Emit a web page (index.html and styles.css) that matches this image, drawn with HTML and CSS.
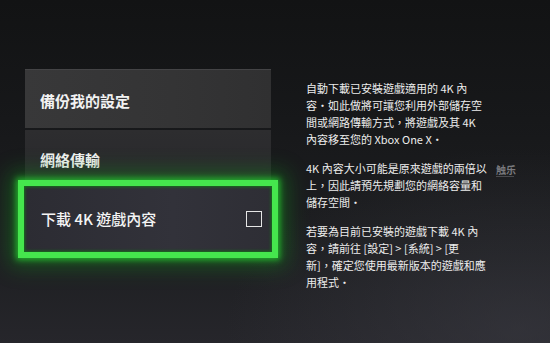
FILE: index.html
```html
<!DOCTYPE html>
<html lang="zh-Hant">
<head>
<meta charset="utf-8">
<title>Xbox 設定</title>
<link rel="stylesheet" href="styles.css">
</head>
<body>
<main class="screen">
  <section class="menu">
    <div class="item item-backup">備份我的設定</div>
    <div class="item item-net">網絡傳輸</div>
    <div class="item item-focus">
      <span class="focus-label">下載 4K 遊戲內容</span>
      <span class="check"></span>
    </div>
  </section>
  <section class="desc">
    <p>
      <span class="line">自動下載已安裝遊戲適用的 4K 內</span>
      <span class="line">容・如此做將可讓您利用外部儲存空</span>
      <span class="line">間或網路傳輸方式，將遊戲及其 4K</span>
      <span class="line">內容移至您的 Xbox One X・</span>
    </p>
    <p>
      <span class="line">4K 內容大小可能是原來遊戲的兩倍以</span>
      <span class="line">上，因此請預先規劃您的網絡容量和</span>
      <span class="line">儲存空間・</span>
    </p>
    <p>
      <span class="line">若要為目前已安裝的遊戲下載 4K 內</span>
      <span class="line">容，請前往 [設定] &gt; [系統] &gt; [更</span>
      <span class="line">新]，確定您使用最新版本的遊戲和應</span>
      <span class="line">用程式・</span>
    </p>
  </section>
  <span class="watermark">触乐<i class="wm-sub"></i></span>
</main>
</body>
</html>
```

FILE: styles.css
```css
html, body {
  margin: 0;
  padding: 0;
}

body {
  width: 550px;
  height: 343px;
  overflow: hidden;
  background: #161718;
  font-family: "Noto Sans CJK TC", "Noto Sans", sans-serif;
}

.screen {
  position: relative;
  box-sizing: border-box;
  width: 550px;
  height: 343px;
  display: flex;
  align-items: flex-start;
  padding: 69px 0 0 25px;
  background:
    radial-gradient(ellipse 420px 260px at 520px 330px, rgba(60, 60, 68, 0.55), rgba(60, 60, 68, 0) 70%),
    linear-gradient(180deg, #121314 0%, #17181a 35%, #1e1f22 75%, #26262b 100%);
}

.menu {
  width: 246px;
  display: flex;
  flex-direction: column;
}

.item {
  box-sizing: border-box;
  color: #f2f2f2;
  font-size: 15px;
  line-height: 18px;
  font-weight: 700;
  padding-left: 15px;
}

.item-backup {
  height: 59px;
  padding-top: 22px;
  background: linear-gradient(90deg, #383839 0%, #343435 60%, #303031 100%);
  border-top: 1px solid #444446;
}

.item-net {
  height: 50px;
  margin-top: 2px;
  padding-top: 21px;
  background: linear-gradient(180deg, #2d2d2f 0%, #29292c 100%);
}

.item-focus {
  position: relative;
  z-index: 1;
  height: 78px;
  margin: 0 -7px 0 -7px;
  padding: 0 10px 0 17px;
  display: flex;
  align-items: center;
  justify-content: space-between;
  border: 6px solid #45e64d;
  background: linear-gradient(90deg, #2c2c33 0%, #32323a 60%, #2e2e35 100%);
  box-shadow:
    0 0 6px 2px rgba(40, 210, 50, 0.75),
    0 0 20px 8px rgba(20, 150, 30, 0.45),
    inset 0 0 3px 1px rgba(20, 120, 25, 0.9);
  font-weight: 500;
}

.focus-label {
  font-size: 15px;
  color: #f4f4f4;
}

.check {
  width: 14px;
  height: 14px;
  border: 1.5px solid #e6e6e6;
}

.desc {
  margin: 11px 0 0 35px;
  color: #ececec;
  font-size: 11px;
  line-height: 17px;
}

.desc p {
  margin: 0 0 12px 0;
}

.line {
  display: block;
  white-space: nowrap;
}

.watermark {
  position: absolute;
  left: 496px;
  top: 164px;
  display: flex;
  flex-direction: column;
  gap: 1px;
  color: #7a7a7e;
  font-size: 10px;
  line-height: 11px;
  font-weight: 700;
}

.wm-sub {
  display: block;
  width: 18px;
  height: 1px;
  background: #4a4a4e;
}
```
